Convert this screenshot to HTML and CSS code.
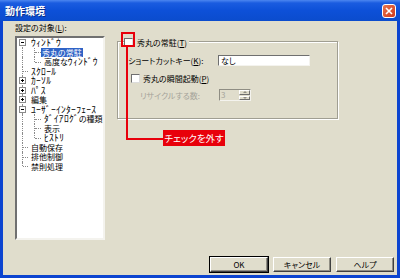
FILE: index.html
```html
<!DOCTYPE html>
<html lang="ja">
<head>
  <meta charset="UTF-8">
  <title>動作環境</title>
  <link rel="stylesheet" href="styles.css">
</head>
<body>
  <div class="window">
    <div class="titlebar">
      <span class="title">動作環境</span>
      <span class="close">
        <svg width="8" height="8" viewBox="0 0 8 8"><path d="M1 1 L7 7 M7 1 L1 7" stroke="#fff" stroke-width="1.6"/></svg>
      </span>
    </div>

    <div class="client">
      <div class="main">
        <!-- Left: category tree -->
        <div class="left">
          <div class="label">設定の対象(<u>L</u>):</div>
          <div class="tree">
            <div class="row"><span class="cell top"><span class="exp"></span></span><span class="txt k">ｳｨﾝﾄﾞｳ</span></div>
            <div class="row"><span class="cell pipe"></span><span class="cell tee"></span><span class="txt sel">秀丸の常駐</span></div>
            <div class="row"><span class="cell pipe"></span><span class="cell end"></span><span class="txt">高度な<span class="k">ｳｨﾝﾄﾞｳ</span></span></div>
            <div class="row"><span class="cell tee"></span><span class="txt k">ｽｸﾛｰﾙ</span></div>
            <div class="row"><span class="cell pipe"><span class="exp plus"></span></span><span class="txt k">ｶｰｿﾙ</span></div>
            <div class="row"><span class="cell pipe"><span class="exp plus"></span></span><span class="txt k">ﾊﾟｽ</span></div>
            <div class="row"><span class="cell pipe"><span class="exp plus"></span></span><span class="txt">編集</span></div>
            <div class="row"><span class="cell pipe"><span class="exp"></span></span><span class="txt k">ﾕｰｻﾞｰｲﾝﾀｰﾌｪｰｽ</span></div>
            <div class="row"><span class="cell pipe"></span><span class="cell tee"></span><span class="txt"><span class="k">ﾀﾞｲｱﾛｸﾞ</span>の種類</span></div>
            <div class="row"><span class="cell pipe"></span><span class="cell tee"></span><span class="txt">表示</span></div>
            <div class="row"><span class="cell pipe"></span><span class="cell end"></span><span class="txt k">ﾋｽﾄﾘ</span></div>
            <div class="row"><span class="cell tee"></span><span class="txt">自動保存</span></div>
            <div class="row"><span class="cell tee"></span><span class="txt">排他制御</span></div>
            <div class="row"><span class="cell end"></span><span class="txt">禁則処理</span></div>
          </div>
        </div>

        <!-- Right: options group -->
        <div class="right">
          <div class="group">
            <div class="group-head"><span class="check"></span><span class="gtitle">秀丸の常駐(<u>T</u>)</span></div>
            <div class="field">
              <span class="flabel">ショートカットキー(<u>K</u>):</span>
              <span class="input">なし</span>
            </div>
            <div class="opt"><span class="check"></span><span>秀丸の瞬間起動(<u>P</u>)</span></div>
            <div class="field disabled">
              <span class="flabel">リサイクルする数:</span>
              <span class="spin">
                <span class="spin-val">3</span>
                <span class="spin-btns"><span class="arrow up"></span><span class="arrow down"></span></span>
              </span>
            </div>
          </div>
        </div>
      </div>

      <div class="buttons">
        <button class="btn default">OK</button>
        <button class="btn">キャンセル</button>
        <button class="btn">ヘルプ</button>
      </div>

      <!-- Annotation -->
      <div class="mark"></div>
      <div class="leader-v"></div>
      <div class="leader-h"></div>
      <div class="tag">チェックを外す</div>
    </div>
  </div>
</body>
</html>
```

FILE: styles.css
```css
/* Base */
body {
  margin: 0;
  font-family: "Noto Sans CJK JP", sans-serif;
  font-size: 8px;
  font-feature-settings: "palt";
  color: #000;
}

u {
  text-decoration-thickness: 1px;
  text-underline-offset: 1px;
}

/* Window frame */
.window {
  width: 400px;
  height: 278px;
  background: #0c44d0;
  display: flex;
  flex-direction: column;
}

.titlebar {
  height: 21px;
  display: flex;
  align-items: center;
  justify-content: space-between;
  padding: 0 4px 0 5px;
  background: linear-gradient(#4c86f0 0, #1a5ce0 3px, #0d50d8 50%, #0b4ccd 100%);
}

.title {
  color: #fff;
  font-weight: bold;
  font-size: 10px;
  text-shadow: 1px 1px 0 #0a2f8a;
}

.close {
  width: 12px;
  height: 12px;
  border: 1px solid #fff;
  border-radius: 3px;
  background: linear-gradient(135deg, #e8754f, #cf3a1c);
  display: flex;
  align-items: center;
  justify-content: center;
}

.client {
  position: relative;
  flex: 1;
  margin: 0 3px 3px 3px;
  background: #e0ddcc;
  padding: 2px 3px 3px 12px;
  display: flex;
  flex-direction: column;
}

.main {
  display: flex;
  gap: 12px;
}

/* Tree */
.label {
  height: 10px;
  line-height: 10px;
  margin-bottom: 3px;
}

.tree {
  width: 86px;
  height: 200px;
  background: #fff;
  border: 2px solid;
  border-color: #707070 #f4f3ee #f4f3ee #707070;
  overflow: hidden;
}

.row {
  display: flex;
  align-items: center;
  height: 9.5px;
  line-height: 9.5px;
  white-space: nowrap;
}

.txt {
  margin-left: 2px;
  padding: 0 1px;
}

.k {
  font-size: 9.5px;
  line-height: 9.5px;
  font-feature-settings: normal;
  letter-spacing: 0.3px;
}

.txt.sel {
  margin-left: 0;
  background: #2f63c6;
  color: #fff;
}

.cell {
  position: relative;
  width: 11px;
  height: 100%;
  flex: none;
}

.cell + .cell {
  width: 13px;
}

.cell.pipe::before,
.cell.tee::before,
.cell.end::before,
.cell.top::before {
  content: "";
  position: absolute;
  left: 5px;
  top: 0;
  bottom: 0;
  border-left: 1px dotted #8a8a8a;
}

.cell + .cell::before {
  left: 6px !important;
}

.cell.end::before {
  bottom: 50%;
}

.cell.top::before {
  top: 50%;
}

.cell.tee::after,
.cell.end::after {
  content: "";
  position: absolute;
  left: 6px;
  right: 0;
  top: 50%;
  border-top: 1px dotted #8a8a8a;
}

.cell + .cell::after {
  left: 7px !important;
}

.exp {
  position: absolute;
  left: 2px;
  top: 1px;
  width: 5px;
  height: 5px;
  border: 1px solid #8a8a8a;
  background: #fff;
  z-index: 1;
}

.exp::before {
  content: "";
  position: absolute;
  left: 1px;
  right: 1px;
  top: 2px;
  height: 1px;
  background: #000;
}

.exp.plus::after {
  content: "";
  position: absolute;
  top: 1px;
  bottom: 1px;
  left: 2px;
  width: 1px;
  background: #000;
}

/* Options group */
.right {
  padding-top: 18px;
}

.group {
  width: 213px;
  height: 76px;
  border: 1px solid #a09e92;
  box-shadow: inset 1px 1px 0 #fff, 1px 1px 0 #fff;
  padding: 0 0 0 6px;
}

.group-head {
  display: flex;
  align-items: center;
  height: 10px;
  margin-top: -5px;
}

.check {
  width: 7px;
  height: 7px;
  background: #fff;
  border: 1px solid;
  border-color: #6f6f6f #dcdcdc #dcdcdc #6f6f6f;
  flex: none;
}

.gtitle {
  background: #e0ddcc;
  padding: 0 2px 0 4px;
}

.field {
  display: flex;
  align-items: center;
  height: 12px;
  margin-top: 7px;
  padding-left: 4px;
}

.flabel {
  width: 90px;
}

.input {
  width: 88px;
  height: 9px;
  line-height: 9px;
  padding-left: 2px;
  background: #fff;
  border: 1px solid;
  border-color: #6f6f6f #f4f3ee #f4f3ee #6f6f6f;
}

.opt {
  display: flex;
  align-items: center;
  gap: 3px;
  height: 10px;
  margin-top: 7px;
  padding-left: 7px;
}

.field.disabled {
  color: #a5a39a;
  margin-top: 6px;
  padding-left: 16px;
}

.field.disabled .flabel {
  width: 79px;
}

.spin {
  display: flex;
  width: 30px;
  height: 10px;
  border: 1px solid;
  border-color: #8f8d83 #f4f3ee #f4f3ee #8f8d83;
}

.spin-val {
  flex: 1;
  line-height: 10px;
  padding-left: 1px;
}

.spin-btns {
  width: 11px;
  display: flex;
  flex-direction: column;
  gap: 1px;
}

.arrow {
  flex: 1;
  background: #e0ddcc;
  border: 1px solid;
  border-color: #fff #6f6f6f #6f6f6f #fff;
  display: flex;
  align-items: center;
  justify-content: center;
}

.arrow::before {
  content: "";
  border-left: 2px solid transparent;
  border-right: 2px solid transparent;
}

.arrow.up::before {
  border-bottom: 2px solid #8f8d83;
}

.arrow.down::before {
  border-top: 2px solid #8f8d83;
}

/* Buttons */
.buttons {
  margin-top: auto;
  display: flex;
  justify-content: flex-end;
  gap: 5px;
}

.btn {
  width: 58px;
  height: 15px;
  padding: 0;
  font: inherit;
  background: #e0ddcc;
  border: 1px solid;
  border-color: #fff #404040 #404040 #fff;
  box-shadow: inset -1px -1px 0 #8f8d83;
}

.btn.default {
  outline: 1px solid #000;
}

/* Annotation */
.mark {
  position: absolute;
  left: 118px;
  top: 11px;
  width: 10px;
  height: 11px;
  border: 2px solid #e8000b;
}

.leader-v {
  position: absolute;
  left: 123px;
  top: 26px;
  width: 2px;
  height: 93px;
  background: #e8000b;
}

.leader-h {
  position: absolute;
  left: 123px;
  top: 117px;
  width: 38px;
  height: 2px;
  background: #e8000b;
}

.tag {
  position: absolute;
  left: 160px;
  top: 109px;
  width: 62px;
  height: 16px;
  line-height: 16px;
  text-align: center;
  white-space: nowrap;
  background: #e8000b;
  color: #fff;
  font-size: 9.5px;
}
```
